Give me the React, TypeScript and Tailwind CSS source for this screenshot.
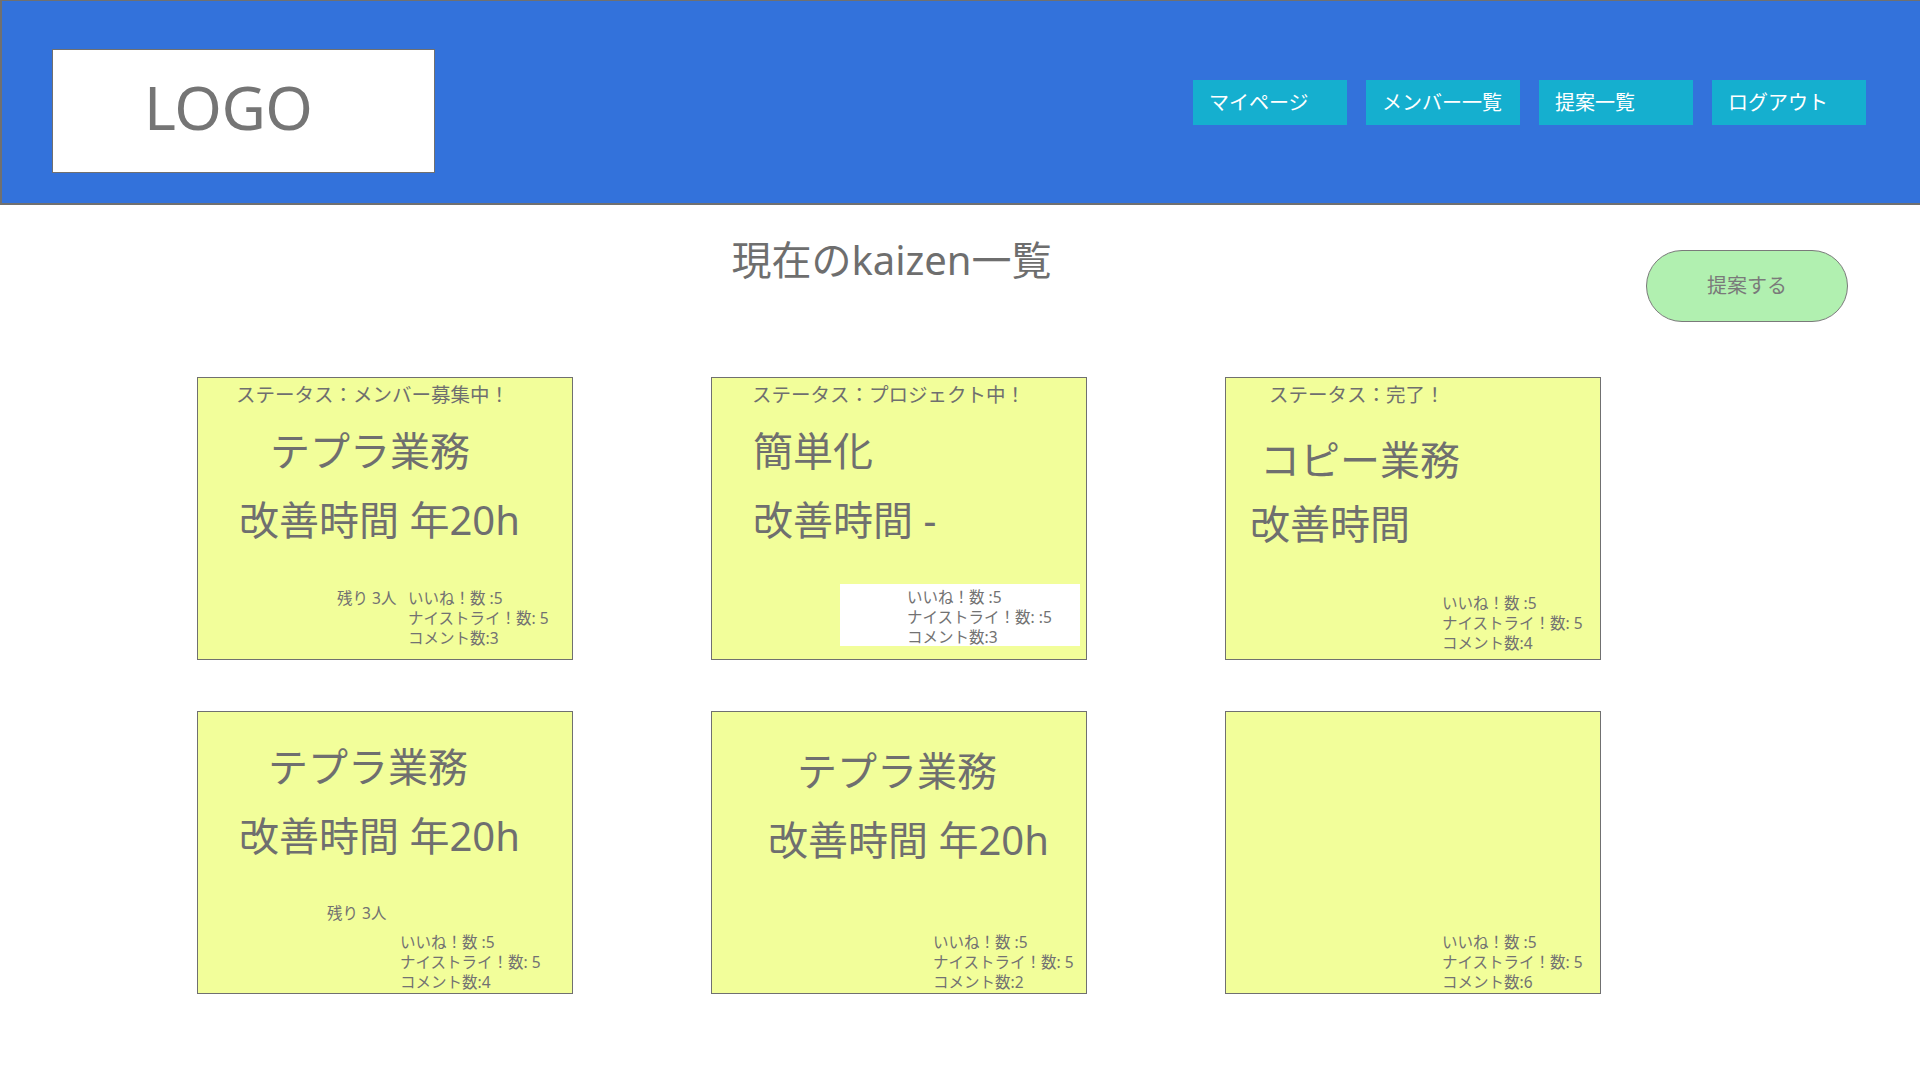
import React from "react";

const navItems = ["マイページ", "メンバー一覧", "提案一覧", "ログアウト"];

const Card = ({ className = "", children }: { className?: string; children?: React.ReactNode }) => (
  <div
    className={`flex flex-col w-[376px] h-[283px] border border-[#707070] bg-[#f2fe9a] text-[#6f6f6f] ${className}`}
  >
    {children}
  </div>
);

const Stats = ({ comments, nice = "5", className = "" }: { comments: string; nice?: string; className?: string }) => (
  <div className={`text-[15.5px] leading-[20px] text-[#727272] whitespace-nowrap ${className}`}>
    <p>いいね！数 :5</p>
    <p>ナイストライ！数: {nice}</p>
    <p>コメント数:{comments}</p>
  </div>
);

const App = () => {
  return (
    <div className="w-[1920px] h-[1080px] bg-white font-['Noto_Sans','Noto_Sans_CJK_JP',sans-serif] text-[#6f6f6f]">
      {/* header */}
      <header className="flex items-start h-[205px] bg-[#3372db] border-t border-l-2 border-b-2 border-[#707070] pl-[50px] pt-[48px] pr-[54px]">
        <div className="w-[383px] h-[124px] bg-white border border-[#707070] flex items-center pl-[91px] pb-[9px]">
          <span className="text-[61px] leading-none text-[#757575] tracking-[-0.5px]">LOGO</span>
        </div>
        <nav className="ml-auto mt-[31px] flex gap-[19px]">
          {navItems.map((item) => (
            <a
              key={item}
              className="w-[154px] h-[45px] bg-[#15afcf] text-white text-[20px] flex items-center pl-[16px]"
            >
              {item}
            </a>
          ))}
        </nav>
      </header>

      {/* title row */}
      <div className="flex items-start mt-[31px]">
        <h1 className="ml-[197px] w-[1403px] pr-[14px] text-center text-[40px] leading-[48px] text-[#6e6e6e]">
          現在のkaizen一覧
        </h1>
        <button className="ml-[46px] mt-[14px] w-[202px] h-[72px] rounded-full bg-[#b1f0b0] border border-[#7a7a7a] text-[20px] text-[#7a7a7a]">
          提案する
        </button>
      </div>

      {/* cards */}
      <div className="ml-[197px] mt-[55px] grid grid-cols-[376px_376px_376px] gap-x-[138px] gap-y-[51px]">
        <Card className="pt-[5px]">
          <p className="pl-[38px] text-[19.5px] leading-[24px]">ステータス：メンバー募集中！</p>
          <p className="pl-[72px] mt-[20px] text-[40px] leading-[48px]">テプラ業務</p>
          <p className="pl-[41px] mt-[21px] text-[40px] leading-[48px]">改善時間 年20h</p>
          <div className="mt-auto mb-[11px] flex pl-[139px]">
            <span className="w-[71px] text-[15.5px] leading-[20px] text-[#727272]">残り 3人</span>
            <Stats comments="3" />
          </div>
        </Card>

        <Card className="pt-[5px]">
          <p className="pl-[40px] text-[19.5px] leading-[24px]">ステータス：プロジェクト中！</p>
          <p className="pl-[41px] mt-[20px] text-[40px] leading-[48px]">簡単化</p>
          <p className="pl-[41px] mt-[21px] text-[40px] leading-[48px]">改善時間 -</p>
          <div className="mt-auto mb-[13px] ml-[128px] w-[240px] h-[62px] bg-white pl-[67px] pt-[3px]">
            <Stats comments="3" nice=":5" />
          </div>
        </Card>

        <Card className="pt-[5px]">
          <p className="pl-[43px] text-[19.5px] leading-[24px]">ステータス：完了！</p>
          <p className="pl-[34px] mt-[29px] text-[40px] leading-[48px]">コピー業務</p>
          <p className="pl-[24px] mt-[16px] text-[40px] leading-[48px]">改善時間</p>
          <Stats comments="4" className="mt-auto mb-[6px] pl-[216px]" />
        </Card>

        <Card className="pt-[31px]">
          <p className="pl-[70px] text-[40px] leading-[48px]">テプラ業務</p>
          <p className="pl-[41px] mt-[21px] text-[40px] leading-[48px]">改善時間 年20h</p>
          <span className="pl-[129px] mt-[43px] text-[15.5px] leading-[20px] text-[#727272]">残り 3人</span>
          <Stats comments="4" className="mt-auto mb-[1px] pl-[202px]" />
        </Card>

        <Card className="pt-[35px]">
          <p className="pl-[85px] text-[40px] leading-[48px]">テプラ業務</p>
          <p className="pl-[56px] mt-[21px] text-[40px] leading-[48px]">改善時間 年20h</p>
          <Stats comments="2" className="mt-auto mb-[1px] pl-[221px]" />
        </Card>

        <Card>
          <Stats comments="6" className="mt-auto mb-[1px] pl-[216px]" />
        </Card>
      </div>
    </div>
  );
};

export default App;
